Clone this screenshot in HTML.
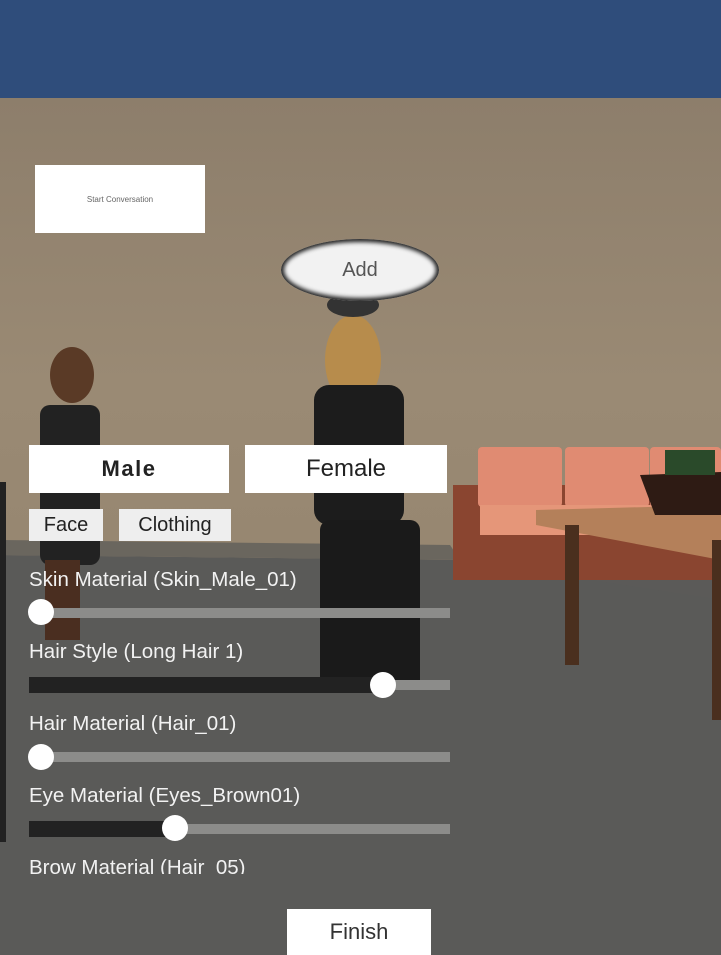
<!DOCTYPE html><html><head><style>
*{margin:0;padding:0;box-sizing:border-box}
body{width:721px;height:955px;overflow:hidden;position:relative;font-family:"Liberation Sans",sans-serif;background:#5b5a58}
.a{position:absolute}
.btn{position:absolute;background:#fff;color:#222;display:flex;align-items:center;justify-content:center}
.lbl{position:absolute;left:29px;color:#f2f2f2;font-size:20.5px}
.tr{position:absolute;left:29px;width:421px;height:10px;background:#8c8c8a}
.fl{position:absolute;left:29px;height:16px;background:#222}
.kn{position:absolute;width:26px;height:26px;border-radius:50%;background:#fff}
</style></head><body>
<div class="a" style="left:0;top:0;width:721px;height:98px;background:#2f4d7b"></div>
<div class="a" style="left:0;top:98px;width:721px;height:480px;background:linear-gradient(#8d7e6b,#9a8a74 60%,#968670)"></div>
<svg class="a" style="left:0;top:0" width="721" height="955">
<polygon points="0,555 460,560 721,600 721,955 0,955" fill="#5a5a58"/>
<polygon points="0,540 450,545 460,560 0,555" fill="#6a665e"/>
<rect x="453" y="485" width="268" height="95" fill="#8a4530"/>
<rect x="478" y="447" width="84" height="60" rx="4" fill="#e08b72"/>
<rect x="565" y="447" width="84" height="60" rx="4" fill="#e08b72"/>
<rect x="650" y="447" width="71" height="60" rx="4" fill="#e08b72"/>
<rect x="480" y="505" width="240" height="30" fill="#e59679"/>
<polygon points="536,510 721,505 721,560 536,525" fill="#b4805a"/>
<rect x="565" y="525" width="14" height="140" fill="#4a2f1e"/>
<rect x="712" y="540" width="9" height="180" fill="#4a2f1e"/>
<polygon points="640,475 721,472 721,515 655,515" fill="#2e1b14"/>
<rect x="665" y="450" width="50" height="25" fill="#2a4a2a"/>
<ellipse cx="72" cy="375" rx="22" ry="28" fill="#5a3a26"/>
<rect x="40" y="405" width="60" height="160" rx="10" fill="#222"/>
<rect x="45" y="560" width="35" height="80" fill="#4a2e20"/>
<ellipse cx="353" cy="360" rx="28" ry="45" fill="#b78c4c"/>
<ellipse cx="353" cy="305" rx="26" ry="12" fill="#333"/>
<rect x="314" y="385" width="90" height="140" rx="15" fill="#1c1c1c"/>
<rect x="320" y="520" width="100" height="170" rx="10" fill="#1a1a1a"/>
</svg>
<div class="a" style="left:0;top:482px;width:6px;height:360px;background:#222"></div>
<div class="btn" style="left:35px;top:165px;width:170px;height:68px;font-size:8px;color:#666">Start Conversation</div>
<div class="btn" style="left:281px;top:239px;width:158px;height:62px;border-radius:50%;box-shadow:0 0 4px 3px #222 inset;font-size:20px;color:#555;background:#f2f2f2">Add</div>
<div class="btn" style="left:29px;top:445px;width:200px;height:48px;font-size:22px;font-weight:bold;letter-spacing:1.5px">Male</div>
<div class="btn" style="left:245px;top:445px;width:202px;height:48px;font-size:24px">Female</div>
<div class="btn" style="left:29px;top:509px;width:74px;height:32px;font-size:20px;background:#eee">Face</div>
<div class="btn" style="left:119px;top:509px;width:112px;height:32px;font-size:20px;background:#eee">Clothing</div>
<div class="lbl" style="top:568px">Skin Material (Skin_Male_01)</div>
<div class="tr" style="top:608px"></div><div class="kn" style="left:28px;top:599px"></div>
<div class="lbl" style="top:640px">Hair Style (Long Hair 1)</div>
<div class="tr" style="top:680px"></div><div class="fl" style="top:677px;width:354px"></div><div class="kn" style="left:370px;top:672px"></div>
<div class="lbl" style="top:712px">Hair Material (Hair_01)</div>
<div class="tr" style="top:752px"></div><div class="kn" style="left:28px;top:744px"></div>
<div class="lbl" style="top:784px">Eye Material (Eyes_Brown01)</div>
<div class="tr" style="top:824px"></div><div class="fl" style="top:821px;width:146px"></div><div class="kn" style="left:162px;top:815px"></div>
<div class="a" style="left:0;top:856px;width:460px;height:18px;overflow:hidden"><div class="lbl" style="top:0">Brow Material (Hair_05)</div></div>
<div class="btn" style="left:287px;top:909px;width:144px;height:46px;font-size:22px;color:#333">Finish</div>
</body></html>
